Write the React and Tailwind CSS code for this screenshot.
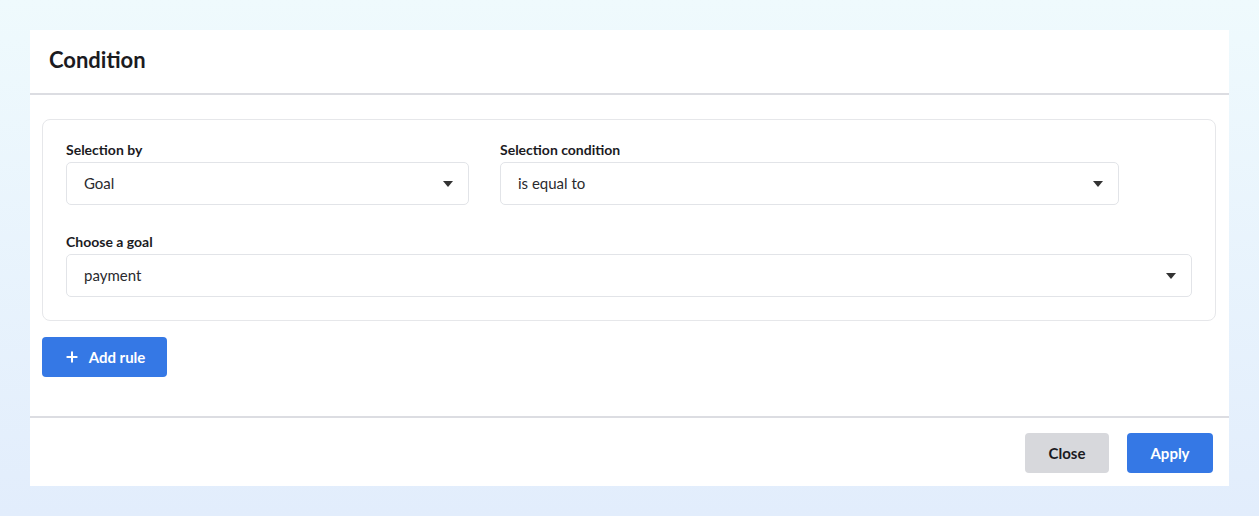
import React, { useState } from 'react';
import { Plus } from 'lucide-react';

const font = { fontFamily: 'Lato, "Noto Sans", sans-serif' };

function Caret() {
  return (
    <svg width="10" height="6" viewBox="0 0 10 6" className="shrink-0">
      <path d="M0 0h10L5 6z" fill="#333" />
    </svg>
  );
}

function SelectBox({ label, value, className }) {
  return (
    <div className={className}>
      <div className="text-[14px] font-bold text-[#1b1b1f] leading-[16px] mb-[4px]">{label}</div>
      <div className="h-[43px] flex items-center justify-between pl-[17px] pr-[15px] border border-[#e2e4e8] rounded-[5px] bg-white">
        <span className="text-[15px] text-[#2a2a2e]">{value}</span>
        <Caret />
      </div>
    </div>
  );
}

export default function App() {
  const [rules] = useState([{ by: 'Goal', condition: 'is equal to', goal: 'payment' }]);

  return (
    <div
      className="w-[1259px] h-[516px] bg-gradient-to-b from-[#effafd] to-[#e2edfc] pt-[30px] pl-[30px]"
      style={font}
    >
      <div className="w-[1199px] h-[456px] bg-white flex flex-col">
        <div className="h-[65px] shrink-0 flex items-center px-[19px] border-b-2 border-[#dcdde2]">
          <h1 className="text-[22px] font-bold text-[#1b1b1f] -mt-[4px]">Condition</h1>
        </div>

        <div className="flex-1 px-[12px] pt-[24px]">
          {rules.map((rule, i) => (
            <div
              key={i}
              className="w-[1174px] border-[1.5px] border-[#e6e7ea] rounded-[8px] px-[23px] pt-[22px] pb-[23px]"
            >
              <div className="flex gap-[31px]">
                <SelectBox label="Selection by" value={rule.by} className="w-[403px]" />
                <SelectBox label="Selection condition" value={rule.condition} className="w-[619px]" />
              </div>
              <SelectBox label="Choose a goal" value={rule.goal} className="mt-[29px]" />
            </div>
          ))}

          <button className="mt-[16px] h-[40px] w-[125px] flex items-center justify-center gap-[9px] bg-[#3578e5] text-white rounded-[4px] text-[15px] font-bold">
            <Plus size={16} strokeWidth={3} />
            Add rule
          </button>
        </div>

        <div className="h-[70px] shrink-0 border-t-2 border-[#dcdde2] flex items-start justify-end gap-[18px] pt-[15px] pr-[16px]">
          <button className="h-[40px] w-[84px] rounded-[4px] bg-[#d7d8dc] text-[15px] font-bold text-[#1b1b1f]">
            Close
          </button>
          <button className="h-[40px] w-[86px] rounded-[4px] bg-[#3578e5] text-[15px] font-bold text-white">
            Apply
          </button>
        </div>
      </div>
    </div>
  );
}
